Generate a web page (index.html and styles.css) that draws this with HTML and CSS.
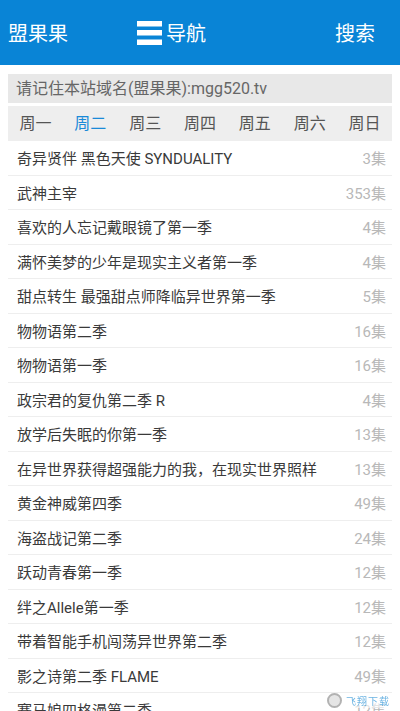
FILE: index.html
```html
<!DOCTYPE html>
<html>
<head>
    <meta charset="utf-8">
    <title>盟果果</title>
    <link rel="stylesheet" href="styles.css">
</head>
<body>
    <!-- Top bar -->
    <div class="header">
        <span class="brand">盟果果</span>
        <span class="nav">
            <svg class="nav-icon" width="25" height="24" viewBox="0 0 25 24">
                <rect x="0" y="0" width="25" height="5.5" fill="#fff"/>
                <rect x="0" y="9" width="25" height="5.5" fill="#fff"/>
                <rect x="0" y="18.5" width="25" height="5.5" fill="#fff"/>
            </svg>
            导航
        </span>
        <span class="search">搜索</span>
    </div>

    <div class="notice">请记住本站域名(盟果果):mgg520.tv</div>

    <!-- Week tabs -->
    <div class="week">
        <span>周一</span>
        <span class="active">周二</span>
        <span>周三</span>
        <span>周四</span>
        <span>周五</span>
        <span>周六</span>
        <span>周日</span>
    </div>

    <ul class="list">
        <li><span class="title">奇异贤伴 黑色天使 SYNDUALITY</span><span class="count">3集</span></li>
        <li><span class="title">武神主宰</span><span class="count">353集</span></li>
        <li><span class="title">喜欢的人忘记戴眼镜了第一季</span><span class="count">4集</span></li>
        <li><span class="title">满怀美梦的少年是现实主义者第一季</span><span class="count">4集</span></li>
        <li><span class="title">甜点转生 最强甜点师降临异世界第一季</span><span class="count">5集</span></li>
        <li><span class="title">物物语第二季</span><span class="count">16集</span></li>
        <li><span class="title">物物语第一季</span><span class="count">16集</span></li>
        <li><span class="title">政宗君的复仇第二季 R</span><span class="count">4集</span></li>
        <li><span class="title">放学后失眠的你第一季</span><span class="count">13集</span></li>
        <li><span class="title">在异世界获得超强能力的我，在现实世界照样</span><span class="count">13集</span></li>
        <li><span class="title">黄金神威第四季</span><span class="count">49集</span></li>
        <li><span class="title">海盗战记第二季</span><span class="count">24集</span></li>
        <li><span class="title">跃动青春第一季</span><span class="count">12集</span></li>
        <li><span class="title">绊之Allele第一季</span><span class="count">12集</span></li>
        <li><span class="title">带着智能手机闯荡异世界第二季</span><span class="count">12集</span></li>
        <li><span class="title">影之诗第二季 FLAME</span><span class="count">49集</span></li>
        <li><span class="title">赛马娘四格漫第二季</span><span class="count">12集</span></li>
    </ul>

    <!-- Watermark -->
    <div class="watermark">
        <span class="wm-logo"></span>
        <span class="wm-text">飞翔下载</span>
    </div>
</body>
</html>
```

FILE: styles.css
```css
/* Global CSS */
* {
    box-sizing: border-box;
}

body {
    font-family: Roboto, "Noto Sans CJK SC", sans-serif;
    margin: 0;
    padding: 0;
    background-color: #fff;
    overflow: hidden;
}

/* Header CSS */
.header {
    display: flex;
    align-items: center;
    height: 65px;
    padding-left: 8px;
    background-color: #0984d6;
    color: #fff;
    font-size: 20px;
}

.nav {
    display: flex;
    align-items: center;
    margin-left: 69px;
}

.nav-icon {
    margin-right: 4px;
}

.search {
    margin-left: auto;
    margin-right: 25px;
}

/* Notice CSS */
.notice {
    height: 29px;
    margin: 9px 8px 0;
    padding-left: 8px;
    line-height: 29px;
    background-color: #e8e8e8;
    color: #666;
    font-size: 16px;
}

/* Week tabs CSS */
.week {
    display: grid;
    grid-template-columns: repeat(7, 1fr);
    height: 35px;
    margin: 3px 8px 0;
    background-color: #eee;
    color: #555;
    font-size: 16px;
}

.week span {
    text-align: center;
    line-height: 35px;
}

.week .active {
    color: #1a8ad8;
}

/* List CSS */
.list {
    list-style: none;
    margin: 0 8px;
    padding: 0;
}

.list li {
    display: flex;
    align-items: center;
    height: 34.5px;
    padding: 0 6px 0 9px;
    border-bottom: 1px solid #eee;
    font-size: 15px;
}

.title {
    flex: 1;
    color: #3a3a3a;
    white-space: nowrap;
    overflow: hidden;
}

.count {
    margin-left: 8px;
    color: #b8b8b8;
}

/* Watermark CSS */
.watermark {
    position: fixed;
    right: 8px;
    bottom: 3px;
    display: flex;
    align-items: center;
    opacity: 0.75;
}

.wm-logo {
    width: 15px;
    height: 15px;
    border: 2px solid #999;
    border-radius: 50%;
    background-color: #ddd;
}

.wm-text {
    margin-left: 2px;
    padding: 0 2px;
    background-color: rgba(255, 255, 255, 0.8);
    color: #3a9ad9;
    font-size: 10px;
    letter-spacing: 1px;
}
```
